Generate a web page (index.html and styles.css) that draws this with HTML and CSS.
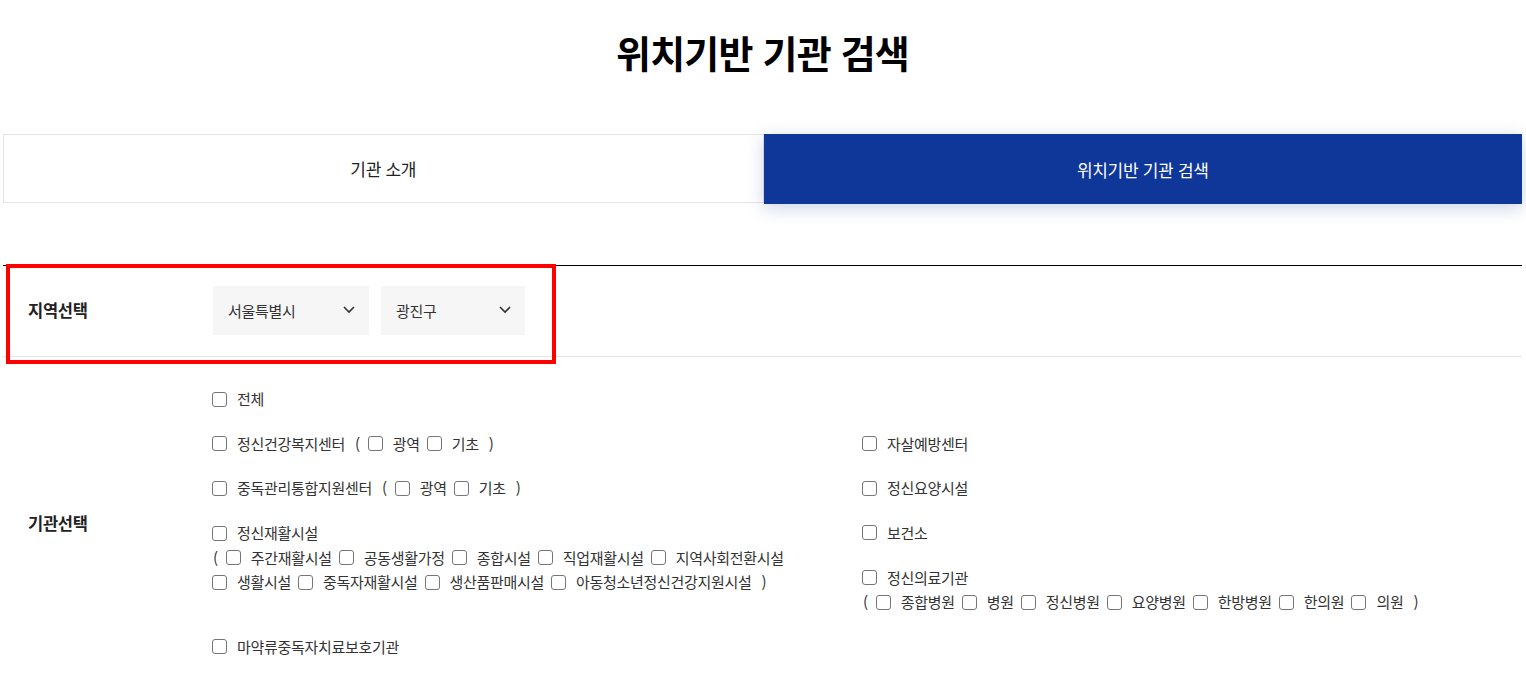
FILE: index.html
```html
<!DOCTYPE html>
<html lang="ko">
<head>
<meta charset="utf-8">
<title>위치기반 기관 검색</title>
<link rel="stylesheet" href="styles.css">
</head>
<body>
<div class="wrap">
  <h1 class="title">위치기반 기관 검색</h1>
  <div class="tabs">
    <a class="tab">기관 소개</a>
    <a class="tab active">위치기반 기관 검색</a>
  </div>
  <div class="form">
    <div class="row region">
      <div class="label">지역선택</div>
      <div class="content selects">
        <div class="select s1"><span>서울특별시</span><svg width="12" height="8" viewBox="0 0 12 8"><polyline points="1,1 6,6 11,1" fill="none" stroke="#333" stroke-width="1.6"/></svg></div>
        <div class="select s2"><span>광진구</span><svg width="12" height="8" viewBox="0 0 12 8"><polyline points="1,1 6,6 11,1" fill="none" stroke="#333" stroke-width="1.6"/></svg></div>
      </div>
    </div>
    <div class="row inst">
      <div class="label">기관선택</div>
      <div class="content grid">
        <div class="item full"><label class="chk"><i class="box"></i>전체</label></div>
        <div class="item"><label class="chk"><i class="box"></i>정신건강복지센터</label><span class="par">(</span><label class="chk"><i class="box"></i>광역</label><label class="chk"><i class="box"></i>기초</label><span class="par">)</span></div>
        <div class="item"><label class="chk"><i class="box"></i>자살예방센터</label></div>
        <div class="item"><label class="chk"><i class="box"></i>중독관리통합지원센터</label><span class="par">(</span><label class="chk"><i class="box"></i>광역</label><label class="chk"><i class="box"></i>기초</label><span class="par">)</span></div>
        <div class="item"><label class="chk"><i class="box"></i>정신요양시설</label></div>
        <div class="item tall">
          <div class="line"><label class="chk"><i class="box"></i>정신재활시설</label></div>
          <div class="line sub"><span class="par open">(</span><label class="chk"><i class="box"></i>주간재활시설</label><label class="chk"><i class="box"></i>공동생활가정</label><label class="chk"><i class="box"></i>종합시설</label><label class="chk"><i class="box"></i>직업재활시설</label><label class="chk"><i class="box"></i>지역사회전환시설</label></div>
          <div class="line sub"><label class="chk"><i class="box"></i>생활시설</label><label class="chk"><i class="box"></i>중독자재활시설</label><label class="chk"><i class="box"></i>생산품판매시설</label><label class="chk"><i class="box"></i>아동청소년정신건강지원시설</label><span class="par">)</span></div>
        </div>
        <div class="item"><label class="chk"><i class="box"></i>보건소</label></div>
        <div class="item stack">
          <div class="line"><label class="chk"><i class="box"></i>정신의료기관</label></div>
          <div class="line sub"><span class="par open">(</span><label class="chk"><i class="box"></i>종합병원</label><label class="chk"><i class="box"></i>병원</label><label class="chk"><i class="box"></i>정신병원</label><label class="chk"><i class="box"></i>요양병원</label><label class="chk"><i class="box"></i>한방병원</label><label class="chk"><i class="box"></i>한의원</label><label class="chk"><i class="box"></i>의원</label><span class="par">)</span></div>
        </div>
        <div class="item full"><label class="chk"><i class="box"></i>마약류중독자치료보호기관</label></div>
      </div>
    </div>
  </div>
</div>
<div class="annot"></div>
</body>
</html>
```

FILE: styles.css
```css
* { box-sizing: border-box; }
html, body { margin: 0; padding: 0; background: #fff; }
body {
  font-family: "Noto Sans CJK KR", "Noto Sans", sans-serif;
  color: #333;
  font-size: 15px;
  letter-spacing: -0.3px;
}
.wrap { padding: 0 4px 0 3px; }
.title {
  margin: 0;
  padding-top: 28px;
  line-height: 48px;
  height: 76px;
  text-align: center;
  font-size: 38px;
  font-weight: 700;
  color: #000;
  letter-spacing: -0.8px;
}
.tabs {
  margin-top: 58px;
  display: flex;
  height: 69px;
}
.tab {
  flex: 1;
  display: flex;
  align-items: center;
  justify-content: center;
  font-size: 17px;
  letter-spacing: -0.3px;
  color: #222;
}
.tab:first-child { border: 1px solid #e4e4e4; }
.tab.active {
  background: #0f379a;
  color: #fff;
  height: 70px;
  box-shadow: 0 4px 16px rgba(15, 55, 154, 0.22);
}
.form {
  margin-top: 62px;
  border-top: 1px solid #000;
}
.row { display: flex; }
.row.region {
  align-items: center;
  border-bottom: 1px solid #e5e5e5;
  height: 91px;
  padding-bottom: 2px;
}
.label {
  width: 209px;
  flex: none;
  padding-left: 25px;
  font-size: 16.5px;
  letter-spacing: -0.3px;
  font-weight: 700;
  color: #222;
}
.selects { display: flex; gap: 12px; padding-left: 1px; }
.select {
  height: 49px;
  background: #f6f6f6;
  display: flex;
  align-items: center;
  justify-content: space-between;
  padding: 0 14px 0 15px;
  color: #333;
}
.s1 { width: 156px; }
.s2 { width: 144px; }
.row.inst { align-items: center; padding: 30px 0 13px; }
.grid {
  display: grid;
  grid-template-columns: 650px 1fr;
  row-gap: 20.6px;
  line-height: 24px;
}
.item { display: flex; flex-wrap: wrap; align-items: center; }
.item.full { grid-column: 1 / 3; }
.item.tall { grid-row: span 2; align-self: start; display: block; }
.item.stack { display: block; }
.line { display: flex; align-items: center; height: 24.5px; }
.chk {
  display: inline-flex;
  align-items: center;
  gap: 10px;
  margin-right: 7px;
  white-space: nowrap;
}
.box {
  display: inline-block;
  width: 15px;
  height: 15px;
  border: 1px solid #767676;
  border-radius: 3px;
  background: #fff;
}
.par { margin-right: 8px; margin-left: 3px; }
.par.open { margin-left: 1px; }
.annot {
  position: absolute;
  left: 6px;
  top: 264px;
  width: 550px;
  height: 100px;
  border: 4px solid #ff0000;
}
```
